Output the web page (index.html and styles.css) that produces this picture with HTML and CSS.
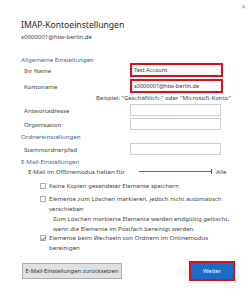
FILE: index.html
```html
<!DOCTYPE html>
<html lang="de">
<head>
    <meta charset="UTF-8">
    <meta name="viewport" content="width=device-width, initial-scale=1.0">
    <title>IMAP-Kontoeinstellungen</title>
    <link rel="stylesheet" href="styles.css">
</head>
<body>
    <div class="dialog">
        <div class="topbar"><span class="close">✕</span></div>

        <h1 class="title">IMAP-Kontoeinstellungen</h1>
        <div class="account">s0000001@htw-berlin.de</div>

        <div class="section general">Allgemeine Einstellungen</div>
        <div class="row name">
            <label>Ihr Name</label>
            <div class="marked"><input type="text" value="Test Account"></div>
        </div>
        <div class="row konto">
            <label>Kontoname</label>
            <div class="marked"><input type="text" value="s0000001@htw-berlin.de"></div>
        </div>
        <div class="hint">Beispiel: "Geschäftlich-" oder "Microsoft-Konto"</div>
        <div class="row">
            <label>Antwortadresse</label>
            <input type="text" class="plain">
        </div>
        <div class="row">
            <label>Organisation</label>
            <input type="text" class="plain">
        </div>

        <div class="section">Ordnereinstellungen</div>
        <div class="row">
            <label>Stammordnerpfad</label>
            <input type="text" class="plain">
        </div>

        <div class="section">E-Mail-Einstellungen</div>
        <div class="offline">
            <span class="offline-label">E-Mail im Offlinemodus halten für</span>
            <div class="slider"><span class="track"></span><span class="thumb"></span></div>
            <span class="slider-value">Alle</span>
        </div>

        <div class="check first">
            <span class="box"></span>
            <span>Keine Kopien gesendeter Elemente speichern</span>
        </div>
        <div class="check">
            <span class="box"></span>
            <span>Elemente zum Löschen markieren, jedoch nicht automatisch verschieben</span>
        </div>
        <p class="note">Zum Löschen markierte Elemente werden endgültig gelöscht, wenn die Elemente im Postfach bereinigt werden.</p>
        <div class="check last">
            <span class="box checked">
                <svg width="7" height="7" viewBox="0 0 7 7"><path d="M1 3.6 L2.8 5.3 L6 1.5" fill="none" stroke="#444" stroke-width="0.8"/></svg>
            </span>
            <span>Elemente beim Wechseln von Ordnern im Onlinemodus bereinigen</span>
        </div>

        <div class="actions">
            <button class="reset">E-Mail-Einstellungen zurücksetzen</button>
            <div class="marked-btn"><button class="next">Weiter</button></div>
        </div>
    </div>
</body>
</html>
```

FILE: styles.css
```css
body { margin: 0; background: #fff; font-family: "Segoe UI", "Noto Sans", sans-serif; font-size: 6.1px; color: #444; }
.dialog { width: 252px; height: 300px; padding: 0 0 0 21px; box-sizing: border-box; }

.topbar { height: 14px; display: flex; justify-content: flex-end; align-items: center; padding-right: 6px; }
.close { font-size: 5.5px; color: #999; }

.title { font-size: 8.6px; font-weight: normal; color: #262626; margin: 5px 0 0; height: 12px; line-height: 12px; }
.account { height: 9px; line-height: 9px; margin-top: 0.5px; color: #3a3a3a; }

.section { color: #35679f; height: 10px; line-height: 10px; margin-top: 1px; }
.section.general { margin-top: 14.5px; }

.row { display: flex; align-items: center; height: 14px; padding-left: 3px; }
.row label { width: 106px; }
.row.name { margin-top: -2px; }
.row.konto { margin-top: 2px; }

input { font-family: inherit; font-size: 5.6px; color: #333; outline: none; margin: 0; }
.plain { width: 91px; height: 12px; box-sizing: border-box; border: 1px solid #cdcdcd; padding: 0 4px; }
.marked { width: 93px; height: 14px; box-sizing: border-box; border: 2px solid #d4121e; }
.marked input { width: 100%; height: 100%; box-sizing: border-box; border: none; padding: 0 2px; background: #fff; }

.hint { height: 10px; line-height: 10px; padding-left: 75px; }

.offline { display: flex; align-items: center; height: 10px; padding-left: 7px; margin-top: -1px; }
.offline-label { width: 111px; }
.slider { display: flex; align-items: center; width: 73px; height: 7px; }
.track { flex: 1; height: 1px; background: #666; }
.thumb { width: 1px; height: 5px; background: #555; }
.slider-value { margin-left: 4px; }

.check { display: flex; align-items: flex-start; padding-left: 19px; line-height: 9.5px; width: 190px; margin-top: 2px; }
.check.first { margin-top: 4px; height: 12px; align-items: center; }
.check.last { margin-top: 0; }
.box { flex: none; width: 6px; height: 6px; border: 1px solid #b0b0b0; box-sizing: border-box; margin: 1.5px 3px 0 0; background: #fff; position: relative; }
.check.first .box { margin-top: 0; }
.box.checked svg { position: absolute; left: -1px; top: -1px; }

.note { margin: 1px 0 0 32px; line-height: 9.5px; width: 190px; }

.actions { display: flex; align-items: center; justify-content: space-between; width: 213px; height: 21px; margin-top: 8.5px; padding-left: 1px; }
button { font-family: inherit; font-size: 5.8px; margin: 0; cursor: pointer; }
.reset { width: 100px; height: 16px; background: #e1e1e1; border: 1px solid #adadad; color: #333; padding: 0; }
.marked-btn { width: 46px; height: 20px; box-sizing: border-box; border: 2px solid #d4121e; }
.next { width: 100%; height: 100%; border: none; background: #1a6dc6; color: #fff; padding: 0; }
```
